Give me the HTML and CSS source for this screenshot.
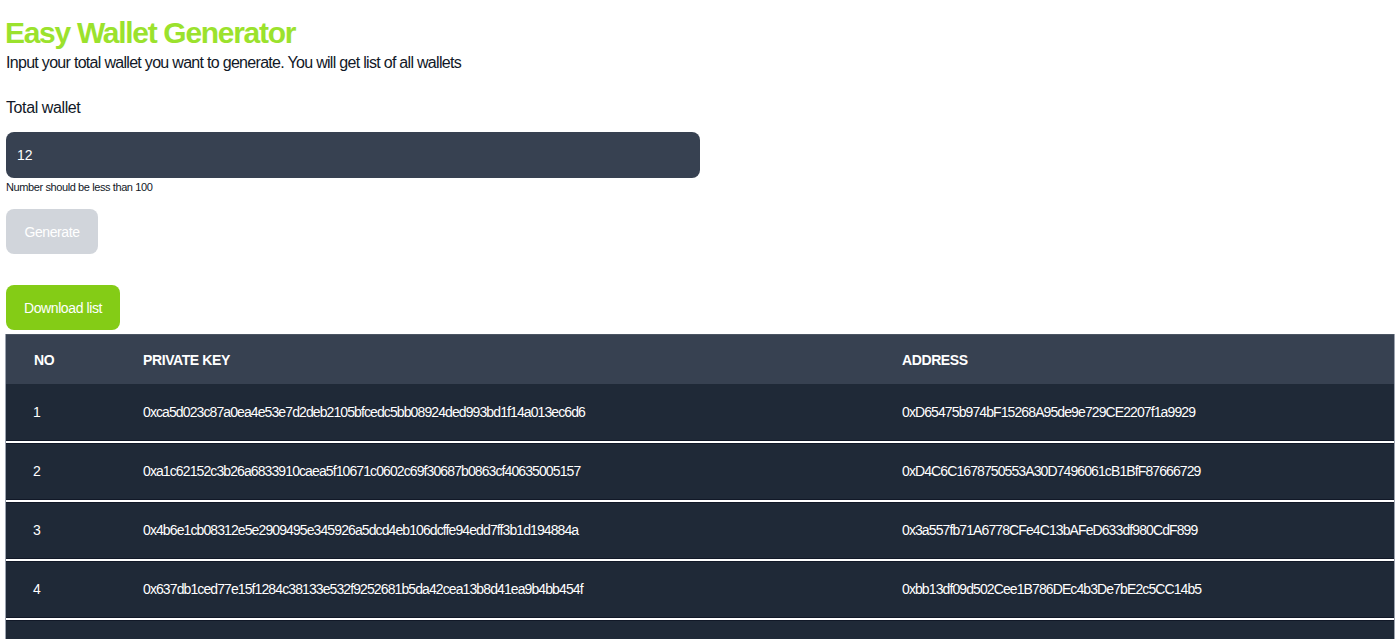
FILE: index.html
```html
<!DOCTYPE html>
<html lang="en">
<head>
    <meta charset="UTF-8">
    <meta name="viewport" content="width=device-width, initial-scale=1.0">
    <title>Easy Wallet Generator</title>
    <link rel="stylesheet" href="styles.css">
</head>
<body>
    <div class="container">
        <!-- Header -->
        <h1 class="title">Easy Wallet Generator</h1>
        <p class="subtitle">Input your total wallet you want to generate. You will get list of all wallets</p>

        <!-- Form -->
        <div class="form">
            <label class="label" for="total">Total wallet</label>
            <input class="input" id="total" type="text" value="12">
            <p class="hint">Number should be less than 100</p>
            <button class="btn btn-disabled">Generate</button>
        </div>

        <button class="btn btn-green">Download list</button>

        <!-- Wallet list -->
        <div class="table-wrap">
            <table class="wallets">
                <colgroup>
                    <col class="col-no">
                    <col class="col-key">
                    <col>
                </colgroup>
                <thead>
                    <tr>
                        <th>No</th>
                        <th>Private Key</th>
                        <th>Address</th>
                    </tr>
                </thead>
                <tbody>
                    <tr>
                        <td>1</td>
                        <td>0xca5d023c87a0ea4e53e7d2deb2105bfcedc5bb08924ded993bd1f14a013ec6d6</td>
                        <td>0xD65475b974bF15268A95de9e729CE2207f1a9929</td>
                    </tr>
                    <tr>
                        <td>2</td>
                        <td>0xa1c62152c3b26a6833910caea5f10671c0602c69f30687b0863cf40635005157</td>
                        <td>0xD4C6C1678750553A30D7496061cB1BfF87666729</td>
                    </tr>
                    <tr>
                        <td>3</td>
                        <td>0x4b6e1cb08312e5e2909495e345926a5dcd4eb106dcffe94edd7ff3b1d194884a</td>
                        <td>0x3a557fb71A6778CFe4C13bAFeD633df980CdF899</td>
                    </tr>
                    <tr>
                        <td>4</td>
                        <td>0x637db1ced77e15f1284c38133e532f9252681b5da42cea13b8d41ea9b4bb454f</td>
                        <td>0xbb13df09d502Cee1B786DEc4b3De7bE2c5CC14b5</td>
                    </tr>
                    <tr>
                        <td>5</td>
                        <td>0x2f8e6a1d0c94b7e35a1f6c08d2e4b97a3c5d1e8f60b2a4c7d9e13f5a8b0c6d2e</td>
                        <td>0x7C2aE91b5D03f4c86A1E7b0d92F3c54A8e6B1d07</td>
                    </tr>
                </tbody>
            </table>
        </div>
    </div>
</body>
</html>
```

FILE: styles.css
```css
body {
    font-family: "Liberation Sans", Arial, sans-serif;
    background: #fff;
    color: #111827;
    margin: 0;
    padding: 0;
    height: 639px;
    overflow: hidden;
}
.container {
    padding: 0 5px;
}
.title {
    color: #9be22d;
    font-size: 30px;
    font-weight: bold;
    letter-spacing: -1.3px;
    margin: 0;
    padding-top: 14px;
    line-height: 38px;
}
.subtitle {
    font-size: 16px;
    letter-spacing: -0.7px;
    margin: 0;
    padding-left: 1px;
    line-height: 22px;
}
.form {
    padding-top: 23px;
}
.label {
    display: block;
    font-size: 16px;
    letter-spacing: -0.4px;
    line-height: 22px;
    padding-left: 1px;
    margin-bottom: 13px;
}
.input {
    display: block;
    width: 694px;
    height: 46px;
    box-sizing: border-box;
    margin-left: 1px;
    background: #374151;
    border: none;
    border-radius: 8px;
    color: #fff;
    font-family: inherit;
    font-size: 14px;
    padding: 0 11px;
}
.hint {
    font-size: 11px;
    letter-spacing: -0.4px;
    margin: 2px 0 0 1px;
    line-height: 14px;
}
.btn {
    display: block;
    height: 45px;
    border: none;
    border-radius: 8px;
    color: #fff;
    font-family: inherit;
    font-size: 14px;
    letter-spacing: -0.4px;
    padding: 0;
    margin-left: 1px;
    white-space: nowrap;
}
.btn-disabled {
    background: #d1d5db;
    margin-top: 15px;
    width: 92px;
}
.btn-green {
    background: #84cc16;
    margin-top: 31px;
    width: 114px;
}
.table-wrap {
    margin-top: 4px;
}
.wallets {
    width: 1390px;
    border-collapse: separate;
    border-spacing: 0;
    table-layout: fixed;
    border-left: 1px solid #9ca3af;
    border-right: 1px solid #9ca3af;
    color: #fff;
    font-size: 14px;
}
.col-no {
    width: 109px;
}
.col-key {
    width: 759px;
}
.wallets th {
    background: #374151;
    height: 49px;
    text-align: left;
    text-transform: uppercase;
    font-size: 14px;
    font-weight: bold;
    letter-spacing: -0.4px;
    padding: 0 28px;
    border-top: 1px solid #4b5563;
}
.wallets td {
    background: #1f2937;
    height: 56px;
    padding: 0 28px;
    letter-spacing: -0.9px;
    white-space: nowrap;
    border-bottom: 1px solid #111827;
}
.wallets tbody tr + tr td {
    border-top: 2px solid #fff;
    box-shadow: inset 0 1px 0 #111827;
}
.wallets td:first-child {
    padding-left: 27px;
}
```
